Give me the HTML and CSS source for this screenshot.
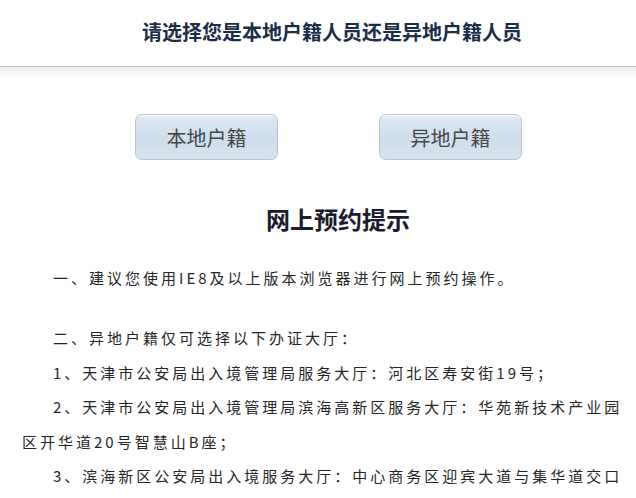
FILE: index.html
```html
<!DOCTYPE html>
<html lang="zh-CN">
<head>
<meta charset="utf-8">
<title>网上预约</title>
<link rel="stylesheet" href="styles.css">
</head>
<body>
<header class="top">
  <h1 class="top-title">请选择您是本地户籍人员还是异地户籍人员</h1>
</header>
<div class="shade"></div>
<div class="choices">
  <button class="choice">本地户籍</button>
  <button class="choice">异地户籍</button>
</div>
<h2 class="notice-title">网上预约提示</h2>
<div class="notice">
  <p class="para gap">一、建议您使用IE8及以上版本浏览器进行网上预约操作。</p>
  <p class="para">二、异地户籍仅可选择以下办证大厅：</p>
  <p class="para">1、天津市公安局出入境管理局服务大厅：河北区寿安街19号；</p>
  <p class="para">2、天津市公安局出入境管理局滨海高新区服务大厅：华苑新技术产业园区开华道20号智慧山B座；</p>
  <p class="para">3、滨海新区公安局出入境服务大厅：中心商务区迎宾大道与集华道交口南侧滨海新区行政审批中心；</p>
</div>
</body>
</html>
```
FILE: styles.css
```css
html, body {
  margin: 0;
  padding: 0;
  background: #ffffff;
  overflow: hidden;
}
body {
  font-family: "Noto Sans CJK SC", "Noto Sans", sans-serif;
  width: 636px;
  height: 498px;
}
.top {
  height: 66px;
  border-bottom: 1px solid #bcbcbc;
  display: flex;
  justify-content: center;
}
.top-title {
  margin: 0;
  padding-left: 28px;
  font-size: 20px;
  line-height: 63px;
  font-weight: 700;
  color: #1c2d47;
}
.shade {
  height: 12px;
  background: linear-gradient(to bottom, #eceeee, #ffffff);
}
.choices {
  display: flex;
  gap: 101px;
  padding-left: 135px;
  padding-top: 35px;
}
.choice {
  width: 143px;
  height: 46px;
  border: 1px solid #b5c5d3;
  border-radius: 7px;
  background: linear-gradient(to bottom, #eaf1f8 0%, #d9e5f1 12%, #cfdeec 60%, #d8e4f0 100%);
  box-shadow: inset 0 1px 0 #f6f9fc;
  font-family: "Noto Sans CJK SC", sans-serif;
  font-size: 20px;
  color: #464646;
  padding: 0;
  letter-spacing: 0;
}
.notice-title {
  margin: 44px 0 0 0;
  padding-left: 40px;
  text-align: center;
  font-size: 24px;
  line-height: 30px;
  font-weight: 700;
  color: #1b1b2e;
}
.notice {
  width: 604px;
  padding-left: 22px;
  padding-top: 27px;
}
.para {
  margin: 0;
  font-size: 15px;
  letter-spacing: 3px;
  line-height: 34.5px;
  text-indent: 31px;
  color: #262626;
}
.para.gap {
  margin-bottom: 25.5px;
}
```
